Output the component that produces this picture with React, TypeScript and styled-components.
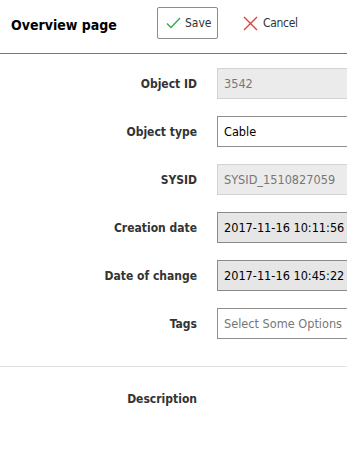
import React from "react";
import styled, { createGlobalStyle } from "styled-components";

const Global = createGlobalStyle`
  html, body { margin: 0; padding: 0; background: #fff; }
  body { font-family: "DejaVu Sans Condensed", "DejaVu Sans", sans-serif; color: #333; }
`;

const Page = styled.div`
  width: 347px;
  height: 456px;
  overflow: hidden;
  background: #fff;
`;

const Header = styled.header`
  display: flex;
  align-items: center;
  height: 54px;
  border-bottom: 1px solid #7a7a7a;
  padding-left: 11px;
  box-sizing: border-box;
`;

const Title = styled.h1`
  margin: 0;
  font-size: 14px;
  font-weight: bold;
  color: #000;
  width: 146px;
  white-space: nowrap;
  padding-bottom: 4px;
`;

const SaveButton = styled.button`
  display: flex;
  align-items: center;
  gap: 4px;
  height: 32px;
  width: 61px;
  padding: 0 0 0 8px;
  box-sizing: border-box;
  background: #fff;
  border: 1px solid #8c8c8c;
  border-radius: 2px;
  font-family: inherit;
  font-size: 12px;
  color: #333;
  margin-top: -7px;
`;

const TextButton = styled.button`
  display: flex;
  align-items: center;
  gap: 5px;
  height: 32px;
  padding: 0;
  margin-left: 25px;
  margin-top: -7px;
  background: none;
  border: none;
  font-family: inherit;
  font-size: 12px;
  letter-spacing: -0.3px;
  color: #333;
`;

const Form = styled.div`
  display: flex;
  flex-direction: column;
  gap: 17px;
  padding-top: 14px;
`;

const Row = styled.div`
  display: grid;
  grid-template-columns: 197px 200px;
  column-gap: 20px;
  align-items: center;
`;

const Label = styled.label`
  text-align: right;
  font-weight: bold;
  font-size: 12px;
  color: #333;
  white-space: nowrap;
`;

type Variant = "disabled" | "readonly" | "normal";

const Field = styled.div<{ $variant: Variant; $placeholder?: boolean }>`
  height: 31px;
  box-sizing: border-box;
  display: flex;
  align-items: center;
  padding-left: 6px;
  font-size: 12.6px;
  white-space: nowrap;
  border: 1px solid
    ${(p) => (p.$variant === "disabled" ? "#d2d2d2" : p.$variant === "readonly" ? "#8a8a8a" : "#8f8f8f")};
  background: ${(p) => (p.$variant === "disabled" ? "#ebebeb" : p.$variant === "readonly" ? "#e6e6e6" : "#fff")};
  color: ${(p) => (p.$variant === "disabled" || p.$placeholder ? "#777" : "#000")};
`;

const Divider = styled.hr`
  margin: 27px 0 0;
  border: none;
  border-top: 1px solid #e2e2e2;
`;

const DescRow = styled(Row)`
  margin-top: 25px;
`;

const Check = () => (
  <svg width="15" height="12" viewBox="0 0 15 12" fill="none">
    <path d="M1 6.5 L5 10.5 L14 1" stroke="#2fa84f" strokeWidth="1.3" />
  </svg>
);

const Cross = () => (
  <svg width="15" height="15" viewBox="0 0 15 15" fill="none">
    <path d="M1 1 L14 14 M14 1 L1 14" stroke="#e53935" strokeWidth="1.3" />
  </svg>
);

const fields: { label: string; value: string; variant: Variant; placeholder?: boolean }[] = [
  { label: "Object ID", value: "3542", variant: "disabled" },
  { label: "Object type", value: "Cable", variant: "normal" },
  { label: "SYSID", value: "SYSID_1510827059", variant: "disabled" },
  { label: "Creation date", value: "2017-11-16 10:11:56", variant: "readonly" },
  { label: "Date of change", value: "2017-11-16 10:45:22", variant: "readonly" },
  { label: "Tags", value: "Select Some Options", variant: "normal", placeholder: true },
];

export default function App() {
  return (
    <Page>
      <Global />
      <Header>
        <Title>Overview page</Title>
        <SaveButton>
          <Check />
          Save
        </SaveButton>
        <TextButton>
          <Cross />
          Cancel
        </TextButton>
      </Header>
      <Form>
        {fields.map((f) => (
          <Row key={f.label}>
            <Label>{f.label}</Label>
            <Field $variant={f.variant} $placeholder={f.placeholder}>
              {f.value}
            </Field>
          </Row>
        ))}
      </Form>
      <Divider />
      <DescRow>
        <Label>Description</Label>
        <div />
      </DescRow>
    </Page>
  );
}
